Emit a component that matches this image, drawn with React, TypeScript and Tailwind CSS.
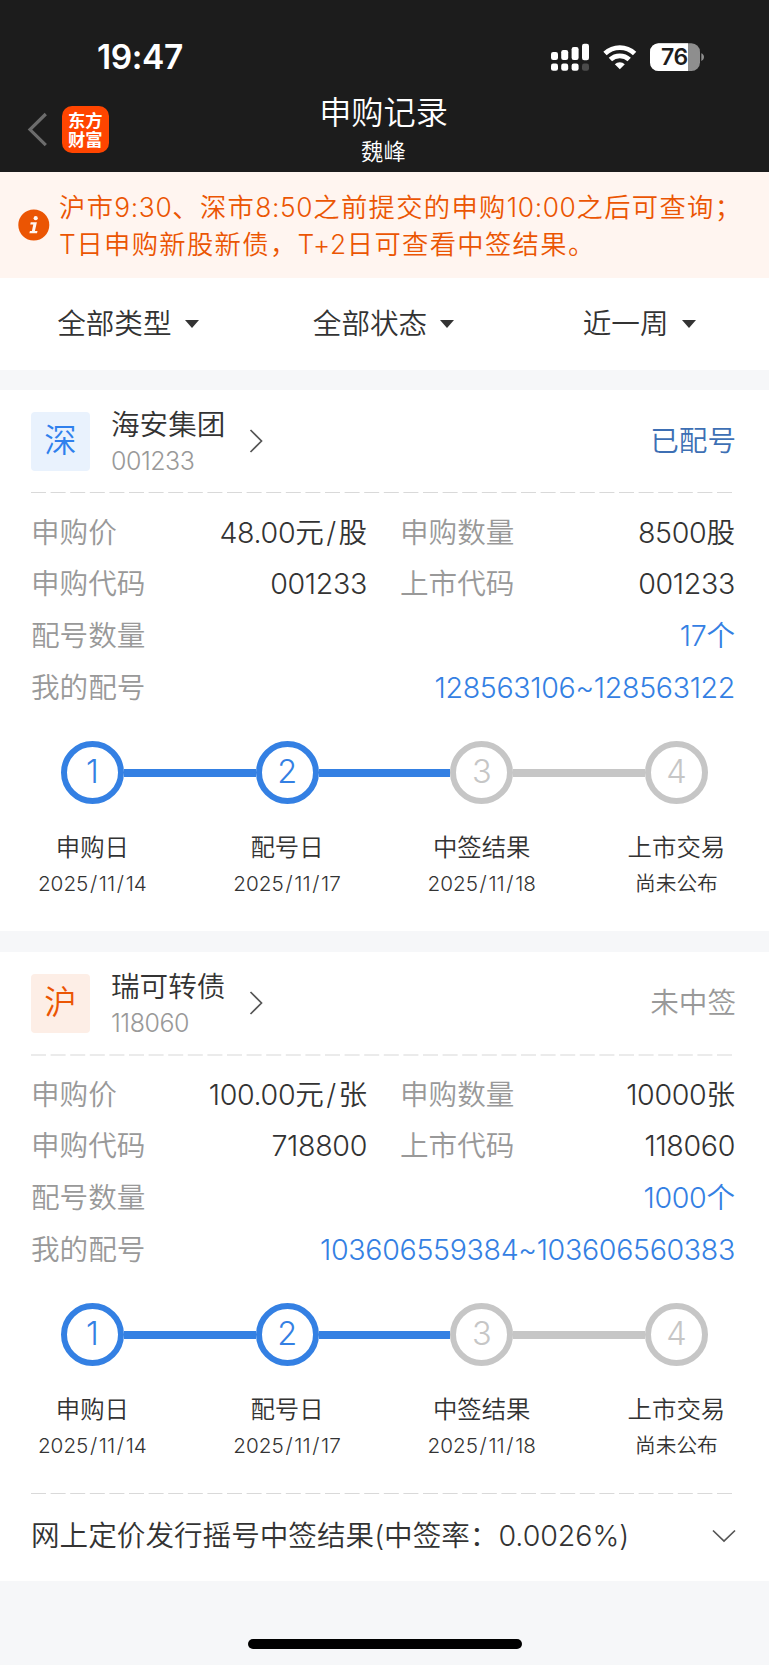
import React from "react";

const FONT = "font-['Inter','Noto_Sans_CJK_SC',sans-serif]";

function Txt({ children, num = "" }: { children: string; num?: string }) {
  const parts = children.split(/(\/|[0-9.:~T+%]+)/).filter(Boolean);
  return (
    <>
      {parts.map((p, i) => {
        if (p === "/") {
          return (
            <span key={i} className="px-[0.08em]">
              /
            </span>
          );
        }
        return (
          <span key={i} className={/^[0-9.:~T+%]/.test(p) ? num : ""}>
            {p}
          </span>
        );
      })}
    </>
  );
}

function Dashes({ color, bold = false }: { color: string; bold?: boolean }) {
  return (
    <svg className="block h-[2px] w-[702px]" viewBox="0 0 702 2">
      <line
        x1="0"
        y1={bold ? 1 : 0.5}
        x2="702"
        y2={bold ? 1 : 0.5}
        stroke={color}
        strokeWidth={bold ? 2 : 1}
        strokeDasharray="15 4.6"
      />
    </svg>
  );
}

function StatusBar() {
  return (
    <div className="flex h-[88px] items-start justify-between pl-[97px] pr-[64px]">
      <div className="mt-[41px] text-[33.5px] leading-[33px] font-semibold tracking-[-0.4px] text-white">19:47</div>
      <svg className="mt-[40px] h-[34px] w-[156px]" viewBox="549 40 156 34">
        <g fill="#fff">
          <rect x="551" y="52" width="7" height="8" rx="2.2" />
          <rect x="561.2" y="50" width="7" height="10" rx="2.2" />
          <rect x="571.6" y="47" width="7" height="13" rx="2.2" />
          <rect x="582" y="43.7" width="7" height="16.5" rx="2.2" />
          <rect x="551" y="63.5" width="7" height="7.2" rx="2.2" />
          <rect x="561.2" y="63.5" width="7" height="7.2" rx="2.2" />
          <rect x="571.6" y="63.5" width="7" height="7.2" rx="2.2" />
          <rect x="582" y="63.5" width="7" height="7.2" rx="2.2" fill="#4b4b4b" />
        </g>
        <g fill="none" stroke="#fff" strokeWidth="4.8">
          <path d="M605 53.6a21.5 21.5 0 0 1 29.6 0" />
          <path d="M610.4 59.6a13.6 13.6 0 0 1 18.8 0" />
        </g>
        <path d="M619.8 69.3l-5-5.1a7.2 7.2 0 0 1 10 0z" fill="#fff" />
        <clipPath id="battery">
          <rect x="650" y="43.3" width="50" height="27.7" rx="8.6" />
        </clipPath>
        <g clipPath="url(#battery)">
          <rect x="650" y="43" width="50" height="29" fill="#8e8e8e" />
          <rect x="650" y="43" width="38" height="29" fill="#fff" />
        </g>
        <path d="M701.3 53.2c1.6.6 2.7 2 2.7 3.9s-1.1 3.3-2.7 3.9z" fill="#8e8e8e" />
        <text x="674.3" y="65.3" textAnchor="middle" fontSize="23" fontWeight="600" letterSpacing="-0.5" fill="#1c1c1c">
          76
        </text>
      </svg>
    </div>
  );
}

function Header() {
  return (
    <header className="h-[172px] bg-[#1c1c1c] text-white">
      <StatusBar />
      <div className="grid h-[84px] grid-cols-[1fr_140px_1fr]">
        <div className="flex items-start pt-[18px] pl-[25px]">
          <svg className="mt-[4px] h-[40px] w-[24px]" viewBox="0 0 24 40">
            <path d="M20.8 4L5 19.6L20.8 35.2" fill="none" stroke="#6c6c6c" strokeWidth="3.2" />
          </svg>
          <div className="ml-[13px] h-[47px] w-[46.5px] rounded-[10px] bg-[#ff4500] pt-[4px] text-center font-['Noto_Sans_CJK_SC',sans-serif] text-[17.3px] leading-[19px] font-bold">
            东方
            <br />
            财富
          </div>
        </div>
        <div className="-ml-[2px] flex flex-col items-center whitespace-nowrap">
          <div className="mt-[7px] text-[32.2px] leading-[36px] font-[350]">申购记录</div>
          <div className="mt-[8px] text-[22.4px] leading-[26px] font-[350]">魏峰</div>
        </div>
        <div />
      </div>
    </header>
  );
}

function Notice() {
  return (
    <div className="flex h-[106px] items-center bg-[#fff5f0] pl-[18px] whitespace-nowrap text-[#eb5503]">
      <svg className="h-[32px] w-[32px]" viewBox="0 0 32 32">
        <circle cx="15.8" cy="16" r="15.5" fill="#eb5503" />
        <g fill="#fff5f0">
          <circle cx="17.7" cy="9.2" r="2.1" />
          <path d="M12.7 13.2h6.2l-2 8.7h2.6l-.5 2.3h-7.6l.5-2.3h2l1.4-6.4h-3.1z" />
        </g>
      </svg>
      <div className="mt-[2px] ml-[9px] text-[26.3px] leading-[37px] font-[350] tracking-[1.35px]">
        <div>
          <Txt num="tracking-[0.65px]">沪市9:30、深市8:50之前提交的申购10:00之后可查询；</Txt>
        </div>
        <div>
          <Txt num="tracking-[0.65px]">T日申购新股新债，T+2日可查看中签结果。</Txt>
        </div>
      </div>
    </div>
  );
}

function Filters() {
  return (
    <div className="grid h-[92px] grid-cols-3 bg-white pr-[2px] text-[28.6px] leading-[32px] font-[350] text-[#333]">
      {["全部类型", "全部状态", "近一周"].map((t) => (
        <div key={t} className="flex items-center justify-center gap-[13px]">
          <span>{t}</span>
          <svg className="h-[8px] w-[14px]" viewBox="0 0 14 8">
            <path d="M0 0h14L7 8z" fill="#333" />
          </svg>
        </div>
      ))}
    </div>
  );
}

type Item = {
  market: string;
  tile: string;
  name: string;
  code: string;
  status: string;
  statusColor: string;
  dash: string;
  boldDash: boolean;
  price: string;
  amount: string;
  applyCode: string;
  count: string;
  numbers: string;
};

function Field({ label, value, color = "text-[#333]" }: { label: string; value: string; color?: string }) {
  return (
    <div className="flex h-[51.6px] items-center justify-between">
      <span className="text-[#999]">{label}</span>
      <span className={color}>
        <Txt num="tracking-[-0.33px]">{value}</Txt>
      </span>
    </div>
  );
}

const STEPS = [
  { title: "申购日", sub: "2025/11/14", done: true },
  { title: "配号日", sub: "2025/11/17", done: true },
  { title: "中签结果", sub: "2025/11/18", done: false },
  { title: "上市交易", sub: "尚未公布", done: false },
];

function Steps() {
  return (
    <div className="mt-[27px] -ml-[5px]">
      <div className="flex h-[64px] items-center pl-[66px]">
        {STEPS.map((s, i) => (
          <React.Fragment key={s.title}>
            {i > 0 && (
              <div className={`mt-[2px] h-[8px] w-[131.7px] shrink-0 ${i < 3 ? "bg-[#3480e3]" : "bg-[#c6c6c6]"}`} />
            )}
            <div
              className={`flex h-[63px] w-[63px] shrink-0 items-center justify-center rounded-full border-[6px] text-[32.5px] leading-none font-light ${
                s.done ? "border-[#3480e3] text-[#3480e3]" : "border-[#c6c6c6] text-[#c6c6c6]"
              }`}
            >
              {i + 1}
            </div>
          </React.Fragment>
        ))}
      </div>
      <div className="mt-[27px] flex">
        {STEPS.map((s) => (
          <div key={s.title} className="flex w-[194.7px] shrink-0 flex-col items-center whitespace-nowrap text-[#333]">
            <div className="text-[24.4px] leading-[32px] font-[350]">{s.title}</div>
            <div className="mt-[8px] text-[20.7px] leading-[26px] font-[350]">
              <Txt>{s.sub}</Txt>
            </div>
          </div>
        ))}
      </div>
    </div>
  );
}

function Card({ item, children }: { item: Item; children?: React.ReactNode }) {
  return (
    <section className="bg-white text-[28.6px] leading-[34px] font-[350] whitespace-nowrap">
      <div className="flex h-[102px] items-center pr-[33px] pl-[31px]">
        <div className={`flex h-[59px] w-[59px] items-center justify-center rounded-[4px] text-[32.4px] ${item.tile}`}>
          {item.market}
        </div>
        <div className="ml-[21px]">
          <div className="mt-[1px] text-[#333]">{item.name}</div>
          <div className="mt-[4px] text-[25px] leading-[30px] tracking-[-0.5px] text-[#999]">{item.code}</div>
        </div>
        <svg className="ml-[24px] h-[26px] w-[16px]" viewBox="0 0 16 26">
          <path d="M1.5 2L12.5 13L1.5 24" fill="none" stroke="#555" strokeWidth="1.7" />
        </svg>
        <div className={`ml-auto ${item.statusColor}`}>{item.status}</div>
      </div>
      <div className="pl-[31px]">
        <Dashes color={item.dash} bold={item.boldDash} />
      </div>
      <div className="mt-[13px] grid grid-cols-[336px_335px] gap-x-[33px] pl-[31px]">
        <Field label="申购价" value={item.price} />
        <Field label="申购数量" value={item.amount} />
        <Field label="申购代码" value={item.applyCode} />
        <Field label="上市代码" value={item.code} />
      </div>
      <div className="pr-[34px] pl-[31px]">
        <Field label="配号数量" value={item.count} color="text-[#3480e3]" />
        <Field label="我的配号" value={item.numbers} color="text-[#3480e3]" />
      </div>
      <Steps />
      {children}
    </section>
  );
}

const ITEMS: Item[] = [
  {
    market: "深",
    tile: "bg-[#e9f2fd] text-[#2f80ed]",
    name: "海安集团",
    code: "001233",
    status: "已配号",
    statusColor: "text-[#3d6fb4]",
    dash: "#d9d9d9",
    boldDash: false,
    price: "48.00元/股",
    amount: "8500股",
    applyCode: "001233",
    count: "17个",
    numbers: "128563106~128563122",
  },
  {
    market: "沪",
    tile: "bg-[#fdeee6] text-[#eb5503]",
    name: "瑞可转债",
    code: "118060",
    status: "未中签",
    statusColor: "text-[#999]",
    dash: "#ebebeb",
    boldDash: true,
    price: "100.00元/张",
    amount: "10000张",
    applyCode: "718800",
    count: "1000个",
    numbers: "103606559384~103606560383",
  },
];

export default function App() {
  return (
    <main className={`flex h-[1665px] w-[769px] flex-col overflow-hidden bg-[#f6f7f9] ${FONT}`}>
      <Header />
      <Notice />
      <Filters />
      <div className="mt-[20px] h-[541px] shrink-0 bg-white">
        <Card item={ITEMS[0]} />
      </div>
      <div className="mt-[21px] h-[629px] shrink-0 bg-white">
        <Card item={ITEMS[1]}>
          <div className="mt-[34px] pl-[31px]">
            <Dashes color="#d9d9d9" />
          </div>
          <div className="flex h-[82px] items-center justify-between pr-[33px] pl-[31px] text-[#333]">
            <span>
              <Txt num="tracking-[-0.05px]">网上定价发行摇号中签结果(中签率：0.0026%)</Txt>
            </span>
            <svg className="h-[14px] w-[24px]" viewBox="0 0 24 14">
              <path d="M1 1.5L12 12L23 1.5" fill="none" stroke="#555" strokeWidth="1.7" />
            </svg>
          </div>
        </Card>
      </div>
      <div className="flex h-[84px] items-end justify-center pb-[16px]">
        <div className="h-[10px] w-[274px] rounded-full bg-black" />
      </div>
    </main>
  );
}
